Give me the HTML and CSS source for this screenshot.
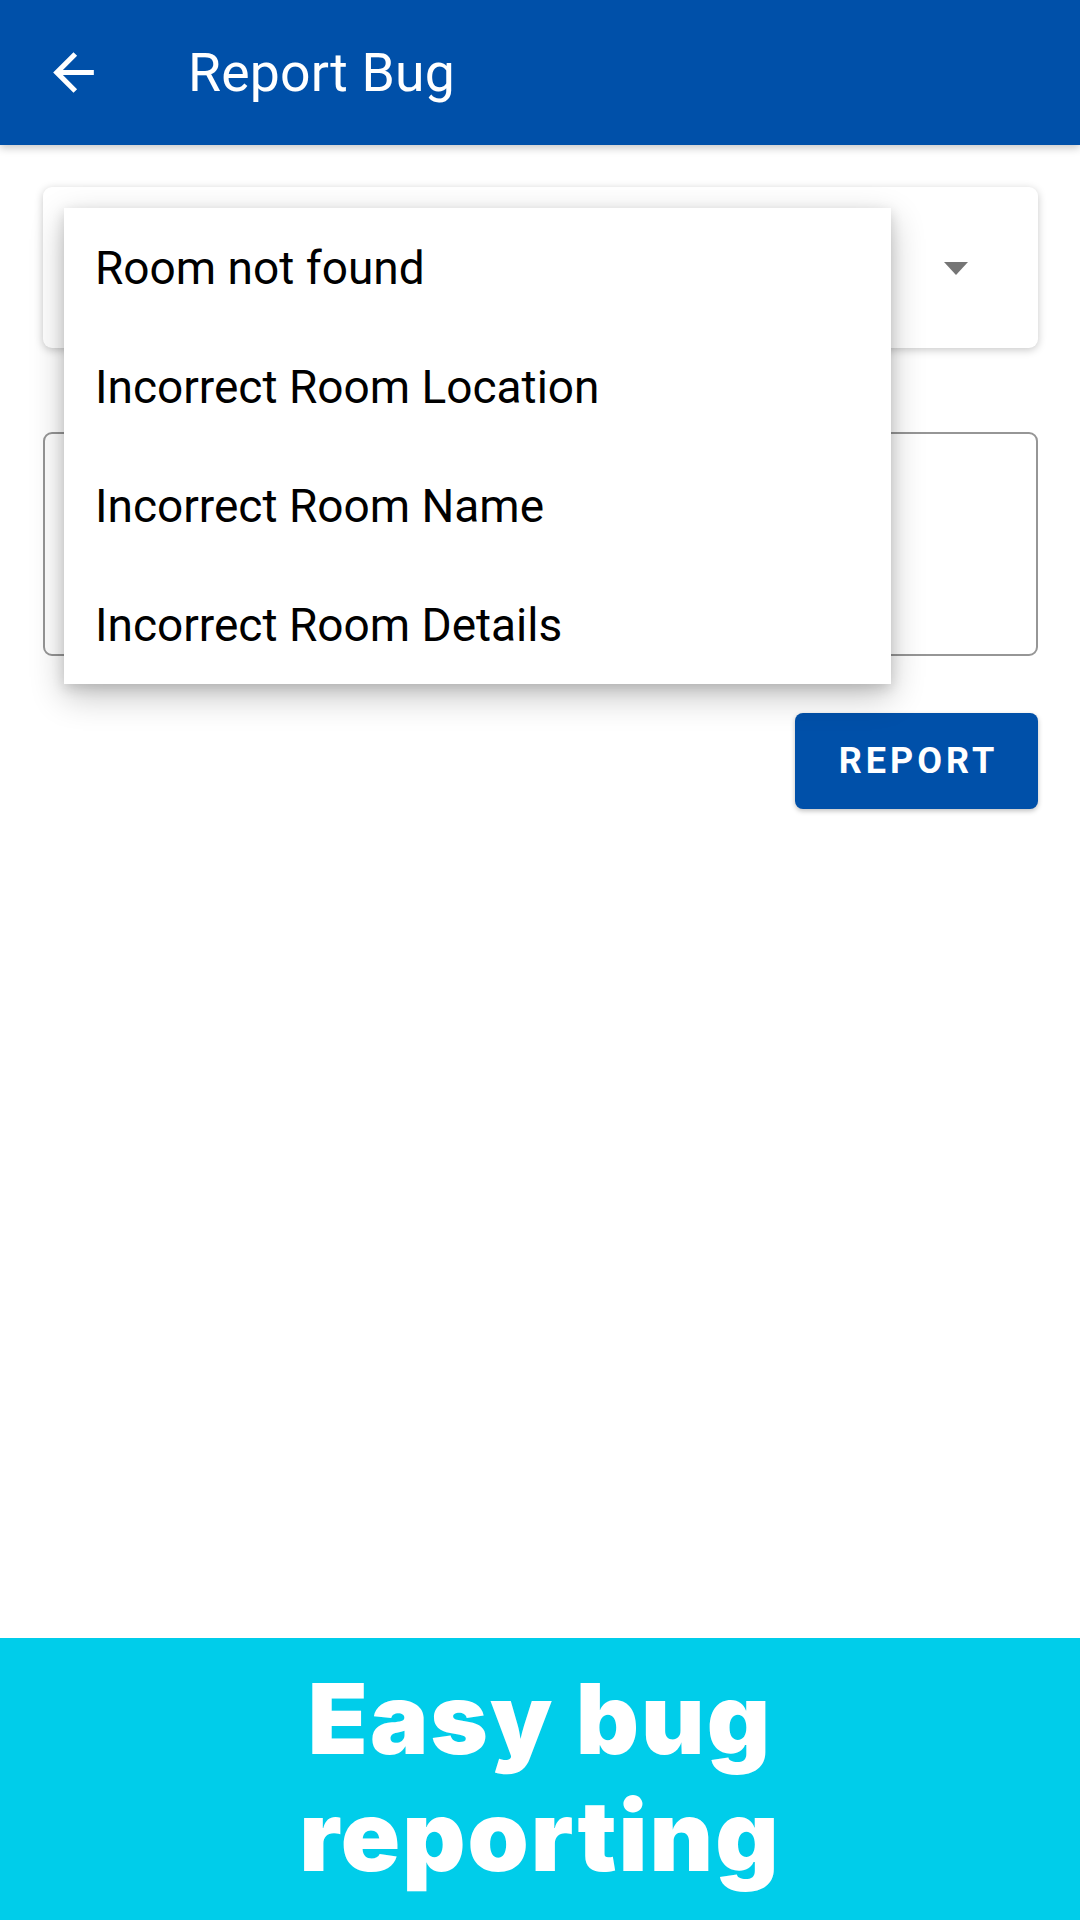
FILE: index.html
```html
<!DOCTYPE html>
<html lang="en">
<head>
<meta charset="utf-8">
<title>Report Bug</title>
<link rel="stylesheet" href="styles.css">
</head>
<body>
<div class="page">
  <header class="appbar">
    <svg class="back" viewBox="0 0 24 24" width="61" height="61" aria-hidden="true">
      <path fill="#fff" d="M20 11H7.83l5.59-5.59L12 4l-8 8 8 8 1.41-1.41L7.83 13H20v-2z"/>
    </svg>
    <h1 class="title">Report Bug</h1>
  </header>
  <main class="content">
    <div class="select-card">
      <span class="caret"></span>
    </div>
    <div class="textarea"></div>
    <div class="actions">
      <button class="report-btn">REPORT</button>
    </div>
    <ul class="menu">
      <li class="menu-item">Room not found</li>
      <li class="menu-item">Incorrect Room Location</li>
      <li class="menu-item">Incorrect Room Name</li>
      <li class="menu-item">Incorrect Room Details</li>
    </ul>
  </main>
  <footer class="banner">
    <p class="banner-text">Easy bug<br>reporting</p>
  </footer>
</div>
</body>
</html>
```

FILE: styles.css
```css
* { box-sizing: border-box; }
html, body { margin: 0; padding: 0; }
body {
  width: 1080px;
  height: 1920px;
  overflow: hidden;
  background: #fff;
  font-family: Roboto, "Noto Sans", sans-serif;
}
.page {
  height: 1920px;
  display: flex;
  flex-direction: column;
}
.appbar {
  height: 145px;
  flex: none;
  background: #0050a9;
  display: flex;
  align-items: center;
  padding-left: 43px;
  box-shadow: 0 3px 8px rgba(0,0,0,0.22);
  position: relative;
  z-index: 2;
}
.back { display: block; flex: none; }
.title {
  margin: 0 0 0 84px;
  color: #fff;
  font-weight: 400;
  font-size: 53.5px;
  letter-spacing: 0.2px;
}
.content {
  flex: 1;
  position: relative;
  padding: 42px 42px 0 43px;
  display: flex;
  flex-direction: column;
}
.select-card {
  height: 161px;
  background: #fff;
  border-radius: 9px;
  box-shadow: 0 2px 8px rgba(0,0,0,0.22);
  display: flex;
  align-items: center;
  justify-content: flex-end;
  padding-right: 70px;
}
.caret {
  width: 0;
  height: 0;
  border-left: 12.5px solid transparent;
  border-right: 12.5px solid transparent;
  border-top: 13px solid #757575;
  margin-top: 2px;
}
.textarea {
  margin-top: 84px;
  height: 224px;
  border: 2.5px solid #969696;
  border-radius: 9px;
}
.actions {
  margin-top: 57px;
  display: flex;
  justify-content: flex-end;
}
.report-btn {
  width: 243px;
  height: 96px;
  border: none;
  border-radius: 8px;
  background: #0050a9;
  color: #fff;
  font-family: Roboto, sans-serif;
  font-weight: 700;
  font-size: 36px;
  letter-spacing: 4px;
  padding: 0 0 0 4px;
  box-shadow: 0 2px 5px rgba(0,0,0,0.25);
}
.menu {
  position: absolute;
  left: 64px;
  top: 63px;
  width: 827px;
  margin: 0;
  padding: 0;
  list-style: none;
  background: #fff;
  box-shadow: 0 12px 32px rgba(0,0,0,0.24), 0 4px 12px rgba(0,0,0,0.14);
}
.menu-item {
  height: 119px;
  display: flex;
  align-items: center;
  padding-left: 31px;
  font-size: 46px;
  color: #000;
}
.banner {
  height: 282px;
  flex: none;
  background: #00cdea;
  display: flex;
  justify-content: center;
}
.banner-text {
  margin: 0;
  padding-top: 22px;
  color: #fff;
  font-family: Inter, sans-serif;
  font-weight: 900;
  font-size: 98px;
  line-height: 117px;
  text-align: center;
  letter-spacing: 2px;
}
```
